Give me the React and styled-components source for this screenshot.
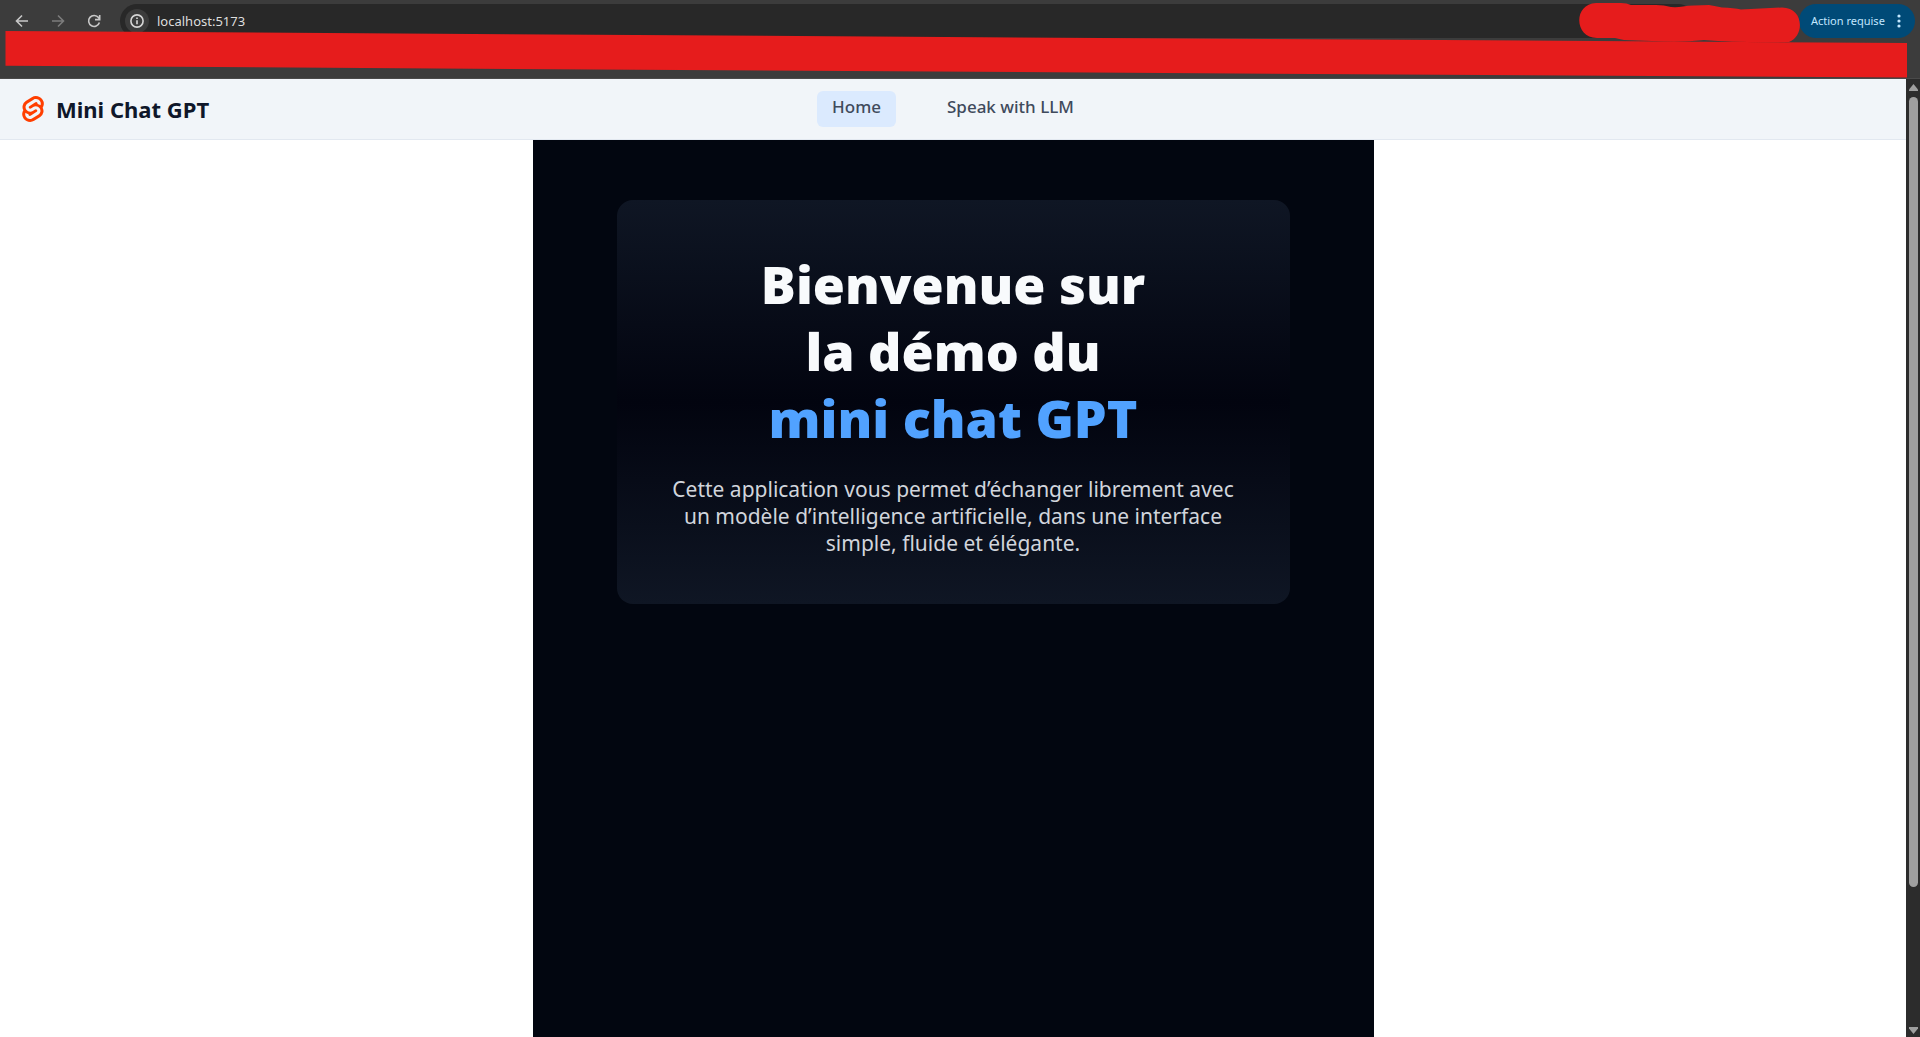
import React from "react";
import styled, { createGlobalStyle } from "styled-components";

const UI = `"Segoe UI", "Noto Sans", "Open Sans", sans-serif`;

const GlobalStyle = createGlobalStyle`
  *, *::before, *::after { box-sizing: border-box; }
  html, body, #root { height: 100%; }
  body { margin: 0; background: #ffffff; font-family: ${UI}; overflow: hidden; }
  h1, p { margin: 0; }
`;

const Window = styled.div`
  display: flex;
  flex-direction: column;
  height: 100vh;
`;

const Chrome = styled.header`
  position: relative;
  flex: none;
  height: 79px;
  padding: 4px 5px 0 10px;
  background: #3c3c3c;
  border-bottom: 1px solid #4a4a4a;
`;

const Toolbar = styled.div`
  display: flex;
  align-items: center;
  height: 34px;
`;

const ToolButton = styled.button`
  display: grid;
  place-items: center;
  width: 24px;
  height: 24px;
  margin-right: 12px;
  padding: 0;
  border: 0;
  background: none;
  color: ${(p) => (p.disabled ? "#7c7c7c" : "#c7c7c7")};
`;

const AddressBar = styled.label`
  flex: 1;
  display: flex;
  align-items: center;
  gap: 8px;
  height: 34px;
  margin: 0 104px 0 2px;
  padding-left: 5px;
  border-radius: 17px;
  background: #282828;
`;

const SiteInfo = styled.span`
  display: grid;
  place-items: center;
  width: 24px;
  height: 24px;
  border-radius: 50%;
  background: #3c3c3c;
  color: #d6d6d6;
`;

const AddressInput = styled.input`
  flex: 1;
  min-width: 0;
  padding: 0;
  border: 0;
  outline: 0;
  background: none;
  color: #dedede;
  font: 400 13px/20px ${UI};
`;

const ActionButton = styled.button`
  flex: none;
  display: flex;
  align-items: center;
  justify-content: space-between;
  width: 116px;
  height: 34px;
  padding: 0 14px 0 12px;
  border: 0;
  border-radius: 17px;
  background: #004a77;
  color: #c2e7ff;
  font: 400 11px/16px ${UI};
  white-space: nowrap;
`;

const Marker = styled.svg`
  position: absolute;
  top: 0;
  left: 0;
  width: 100%;
  height: 79px;
  pointer-events: none;
`;

const Viewport = styled.div`
  flex: 1;
  display: flex;
  min-height: 0;
`;

const Page = styled.div`
  flex: 1;
  display: flex;
  flex-direction: column;
  min-width: 0;
`;

const SiteHeader = styled.header`
  display: grid;
  grid-template-columns: 1fr auto 1fr;
  align-items: center;
  padding: 0 20px;
  height: 61px;
  flex: none;
  background: #f1f5f9;
  border-bottom: 1px solid #e2e8f0;
`;

const Brand = styled.a`
  display: flex;
  align-items: center;
  gap: 10px;
  color: #0f172a;
  font-size: 22px;
  line-height: 28px;
  font-weight: 700;
  text-decoration: none;
`;

const Nav = styled.nav`
  display: flex;
  gap: 36px;
`;

const NavLink = styled.a`
  height: 36px;
  padding: 4px 15px 8px;
  border-radius: 6px;
  background: ${(p) => (p.$active ? "#dbeafe" : "transparent")};
  color: #3f4a5c;
  font-size: 17px;
  line-height: 24px;
  font-weight: 500;
  text-decoration: none;
`;

const Main = styled.main`
  flex: 1;
  width: 100%;
  max-width: 841px;
  margin: 0 auto;
  padding: 60px 84px;
  background: #020610;
`;

const Card = styled.section`
  padding: 50px 48px 47px;
  border-radius: 16px;
  background: linear-gradient(to bottom, #0f1624, #02040f 50%, #0f1624);
  text-align: center;
`;

const Title = styled.h1`
  color: #f8fafc;
  font-size: 52px;
  line-height: 67px;
  font-weight: 900;
`;

const Accent = styled.span`
  color: #51a2ff;
`;

const Lead = styled.p`
  margin-top: 25px;
  color: #d1d5dc;
  font-size: 21px;
  line-height: 27px;
`;

const Scrollbar = styled.div`
  flex: none;
  display: flex;
  flex-direction: column;
  align-items: center;
  gap: 6px;
  width: 14px;
  padding: 5px 0 3px;
  background: #2c2c2c;
`;

const Track = styled.div`
  flex: 1;
  width: 9px;
`;

const Thumb = styled.div`
  height: calc(100% - 134px);
  border-radius: 5px;
  background: #9f9f9f;
`;

function SvelteLogo() {
  return (
    <svg width="26" height="26" viewBox="0 0 24 24" fill="#ff3e00" aria-hidden="true">
      <path d="M10.354 21.125a4.44 4.44 0 0 1-4.765-1.767 4.109 4.109 0 0 1-.703-3.107 3.898 3.898 0 0 1 .134-.522l.105-.321.287.21a7.21 7.21 0 0 0 2.186 1.092l.208.063-.02.208a1.253 1.253 0 0 0 .226.83 1.337 1.337 0 0 0 1.435.533 1.231 1.231 0 0 0 .343-.15l5.59-3.562a1.164 1.164 0 0 0 .524-.778 1.242 1.242 0 0 0-.211-.937 1.338 1.338 0 0 0-1.435-.533 1.23 1.23 0 0 0-.343.15l-2.133 1.36a4.078 4.078 0 0 1-1.135.499 4.44 4.44 0 0 1-4.765-1.766 4.108 4.108 0 0 1-.702-3.108 3.855 3.855 0 0 1 1.742-2.582l5.589-3.563a4.072 4.072 0 0 1 1.135-.499 4.44 4.44 0 0 1 4.765 1.767 4.109 4.109 0 0 1 .703 3.107 3.943 3.943 0 0 1-.134.522l-.105.321-.286-.21a7.204 7.204 0 0 0-2.187-1.093l-.208-.063.02-.207a1.255 1.255 0 0 0-.226-.831 1.337 1.337 0 0 0-1.435-.532 1.231 1.231 0 0 0-.343.15L8.62 9.368a1.162 1.162 0 0 0-.524.778 1.24 1.24 0 0 0 .211.937 1.338 1.338 0 0 0 1.435.533 1.235 1.235 0 0 0 .344-.151l2.132-1.36a4.067 4.067 0 0 1 1.135-.498 4.44 4.44 0 0 1 4.765 1.766 4.108 4.108 0 0 1 .702 3.108 3.857 3.857 0 0 1-1.742 2.583l-5.589 3.562a4.072 4.072 0 0 1-1.135.499m10.358-17.95C18.484-.015 14.082-.96 10.9 1.068L5.31 4.63a6.412 6.412 0 0 0-2.896 4.295 6.753 6.753 0 0 0 .666 4.336 6.43 6.43 0 0 0-.96 2.396 6.833 6.833 0 0 0 1.168 5.167c2.229 3.19 6.63 4.135 9.812 2.108l5.59-3.562a6.41 6.41 0 0 0 2.896-4.295 6.756 6.756 0 0 0-.665-4.336 6.429 6.429 0 0 0 .958-2.396 6.831 6.831 0 0 0-1.167-5.168Z" />
    </svg>
  );
}

const stroke = { fill: "none", stroke: "currentColor", strokeWidth: 1.6 };

export default function App() {
  return (
    <>
      <GlobalStyle />
      <Window>
        <Chrome>
          <Toolbar>
            <ToolButton aria-label="Retour">
              <svg width="14" height="14" viewBox="0 0 14 14" {...stroke}>
                <path d="M13 7H2M7 1.5 1.5 7 7 12.5" />
              </svg>
            </ToolButton>
            <ToolButton aria-label="Avancer" disabled>
              <svg width="14" height="14" viewBox="0 0 14 14" {...stroke}>
                <path d="M1 7h11M7 1.5 12.5 7 7 12.5" />
              </svg>
            </ToolButton>
            <ToolButton aria-label="Actualiser">
              <svg width="14" height="14" viewBox="0 0 14 14" {...stroke}>
                <path d="M12.4 8.5A5.5 5.5 0 1 1 11.5 3.6L12.6 5M12.7 1v4.6H8" />
              </svg>
            </ToolButton>
            <AddressBar>
              <SiteInfo>
                <svg width="14" height="14" viewBox="0 0 14 14" {...stroke}>
                  <circle cx="7" cy="7" r="6.1" />
                  <path d="M7 6.2v4M7 3.5v1.6" />
                </svg>
              </SiteInfo>
              <AddressInput aria-label="Adresse" defaultValue="localhost:5173" />
            </AddressBar>
            <ActionButton>
              Action requise
              <svg width="4" height="16" viewBox="0 0 4 16" fill="currentColor" aria-hidden="true">
                <circle cx="2" cy="3" r="1.6" />
                <circle cx="2" cy="8" r="1.6" />
                <circle cx="2" cy="13" r="1.6" />
              </svg>
            </ActionButton>
          </Toolbar>
          <Marker viewBox="0 0 1920 79" preserveAspectRatio="none" fill="#e61c1c" aria-hidden="true">
            <path d="M5.500 31 1907 43V77.600L5.500 65.800Z" />
            <path d="M1596 3H1621Q1627 3 1631 5H1656Q1664 5 1671 7Q1677 7.500 1683 6.500Q1692 5 1709 5Q1716 6 1722 7.500Q1734 8 1741 9.500L1782 7.500C1804 7.500 1805 36 1789 42Q1740 43 1704 40Q1680 43 1652 41L1624 40Q1619 39 1615 38H1597C1574 38 1573 4 1596 3Z" />
          </Marker>
        </Chrome>
        <Viewport>
          <Page>
            <SiteHeader>
              <Brand href="#">
                <SvelteLogo />
                Mini Chat GPT
              </Brand>
              <Nav>
                <NavLink href="#" $active>Home</NavLink>
                <NavLink href="#chat">Speak with LLM</NavLink>
              </Nav>
            </SiteHeader>
            <Main>
              <Card>
                <Title>
                  Bienvenue sur<br />la démo du<br /><Accent>mini chat GPT</Accent>
                </Title>
                <Lead>
                  Cette application vous permet d’échanger librement avec un modèle d’intelligence
                  artificielle, dans une interface simple, fluide et élégante.
                </Lead>
              </Card>
            </Main>
          </Page>
          <Scrollbar aria-hidden="true">
            <svg width="9" height="7" viewBox="0 0 9 7" fill="#9f9f9f">
              <path d="M4.500 0 9 5.500V7H0V5.500Z" />
            </svg>
            <Track>
              <Thumb />
            </Track>
            <svg width="9" height="7" viewBox="0 0 9 7" fill="#9f9f9f">
              <path d="M4.500 7 9 1.500V0H0V1.500Z" />
            </svg>
          </Scrollbar>
        </Viewport>
      </Window>
    </>
  );
}
